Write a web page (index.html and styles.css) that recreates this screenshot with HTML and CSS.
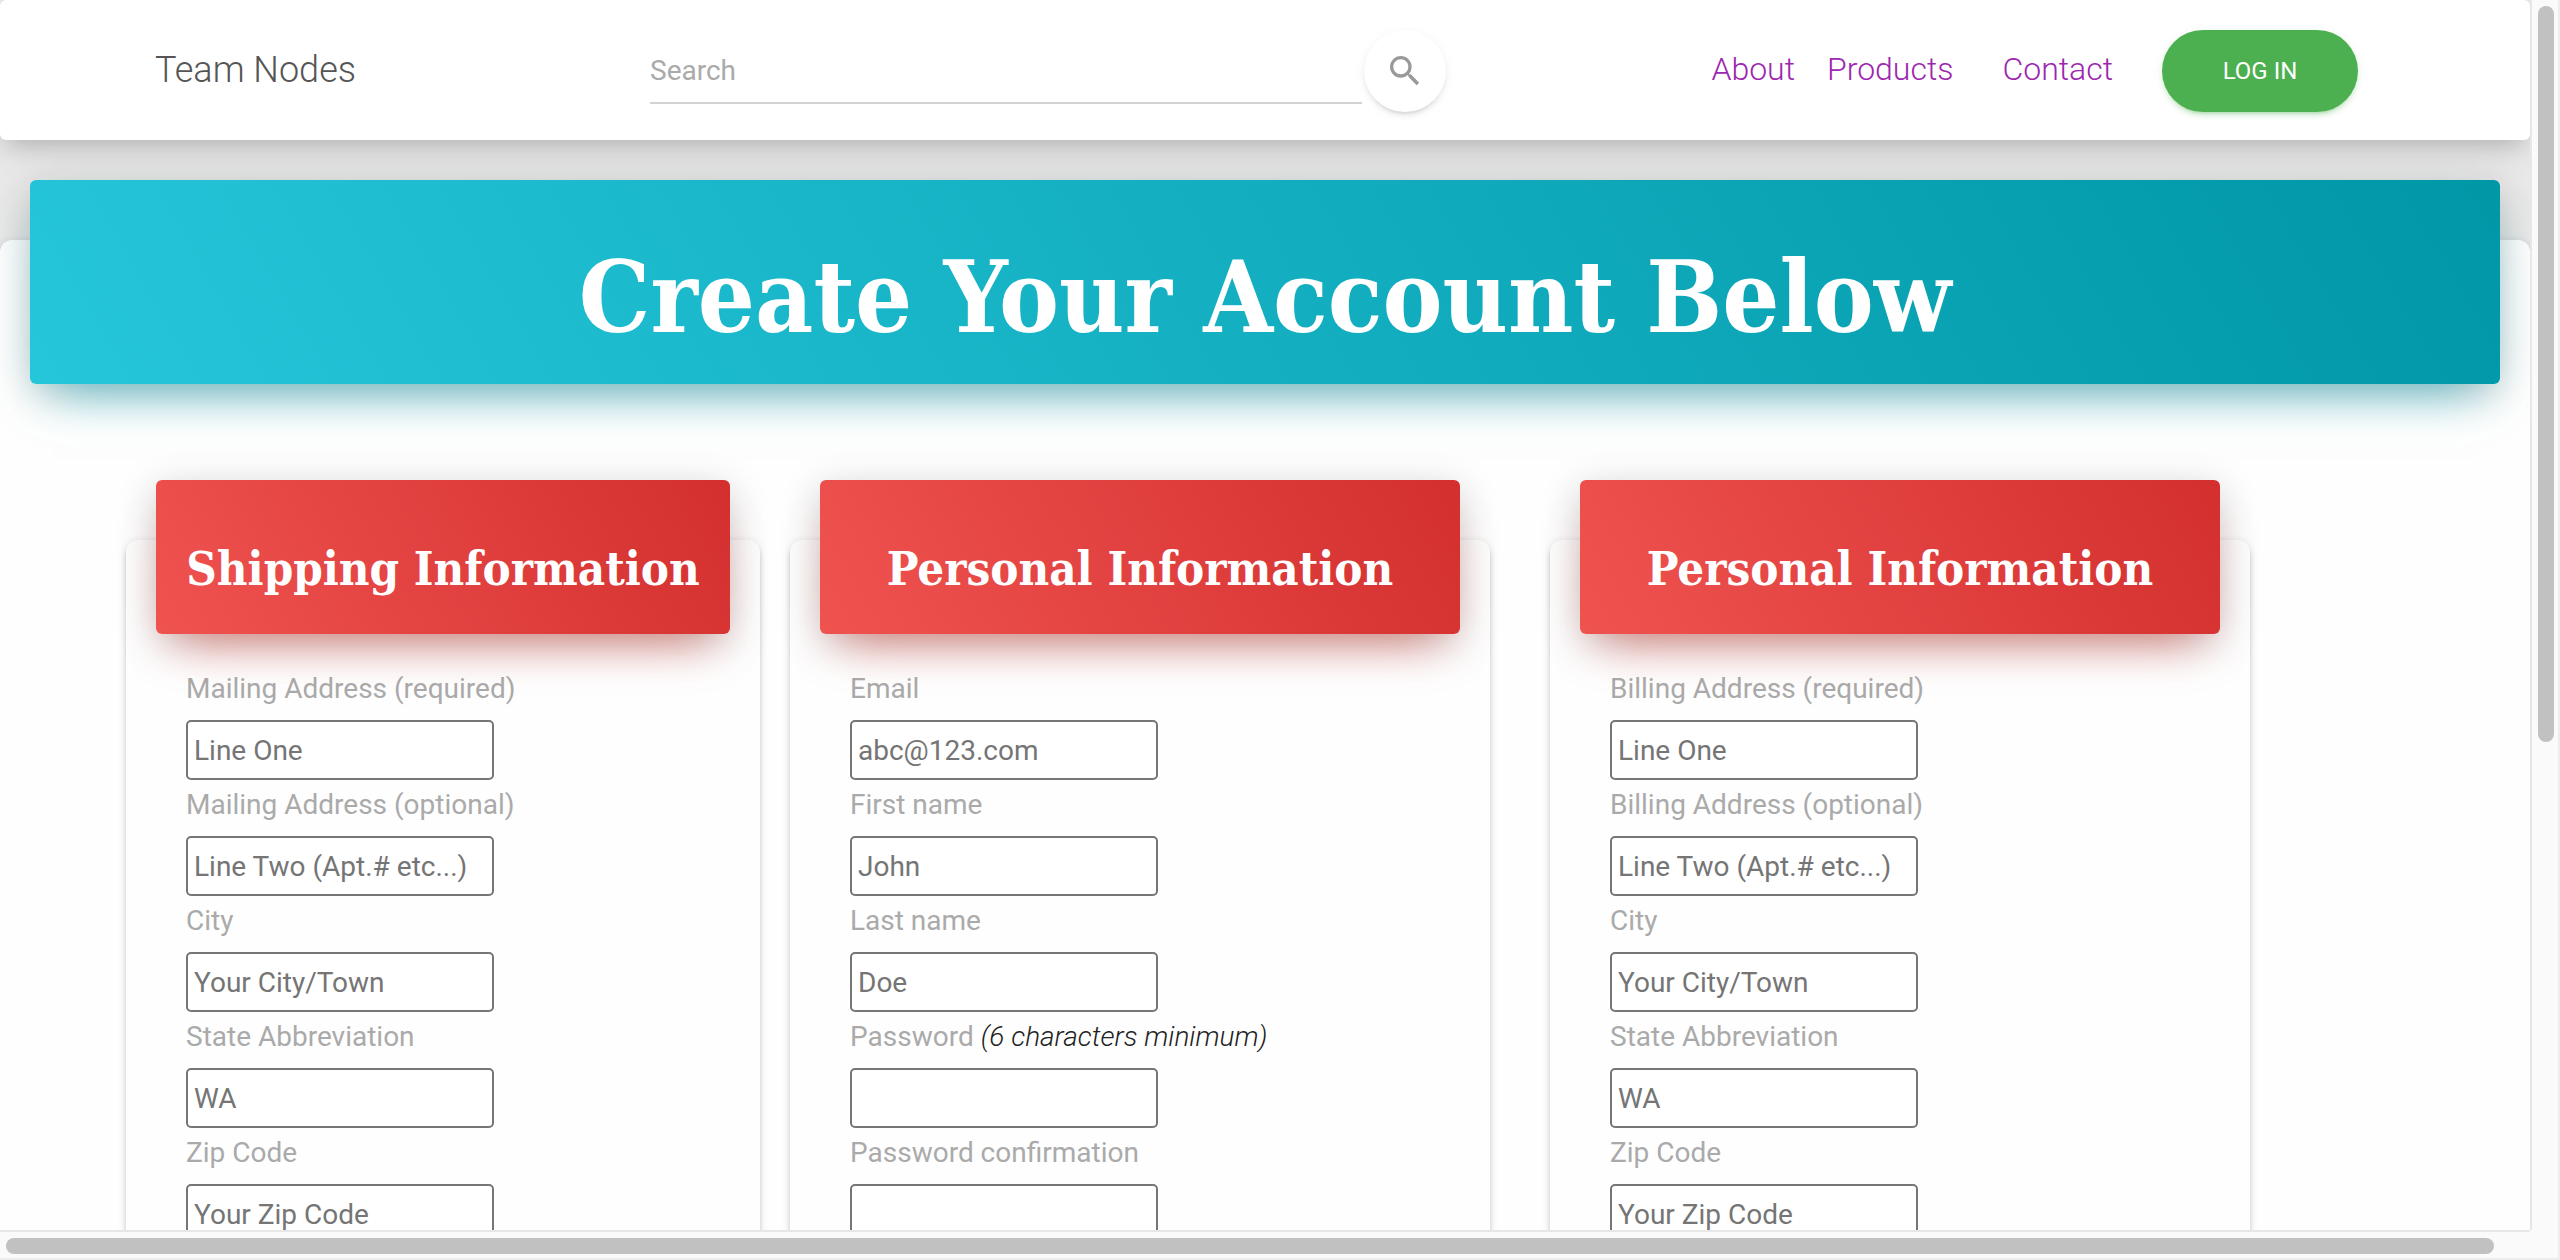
FILE: index.html
```html
<!DOCTYPE html>
<html lang="en">
<head>
<meta charset="utf-8">
<title>Team Nodes</title>
<link rel="stylesheet" href="styles.css">
</head>
<body>
<div class="window">
  <div class="viewport">
    <nav class="navbar">
      <a class="brand" href="#">Team Nodes</a>
      <form class="search">
        <input class="search-input" type="text" placeholder="Search" aria-label="Search">
        <button class="search-button" type="button" aria-label="Search">
          <svg class="search-icon" viewBox="0 0 24 24" aria-hidden="true"><path d="M15.5 14h-.79l-.28-.27A6.471 6.471 0 0 0 16 9.5 6.5 6.5 0 1 0 9.5 16c1.61 0 3.09-.59 4.23-1.57l.27.28v.79l5 4.99L20.49 19l-4.99-5zm-6 0C7.01 14 5 11.99 5 9.5S7.01 5 9.5 5 14 7.01 14 9.5 11.99 14 9.5 14z"/></svg>
        </button>
      </form>
      <div class="links">
        <a class="link" href="#">About</a>
        <a class="link link-wide" href="#">Products</a>
        <a class="link link-wide" href="#">Contact</a>
        <button class="login" type="button">LOG IN</button>
      </div>
    </nav>
    <main class="panel">
      <header class="banner"><h1 class="title">Create Your Account Below</h1></header>
      <div class="cards">
        <section class="card">
          <header class="card-header"><h3 class="card-title">Shipping Information</h3></header>
          <div class="fields">
            <label class="label" for="mail1">Mailing Address (required)</label>
            <input class="field" id="mail1" type="text" placeholder="Line One">
            <label class="label" for="mail2">Mailing Address (optional)</label>
            <input class="field" id="mail2" type="text" placeholder="Line Two (Apt.# etc...)">
            <label class="label" for="mailcity">City</label>
            <input class="field" id="mailcity" type="text" placeholder="Your City/Town">
            <label class="label" for="mailstate">State Abbreviation</label>
            <input class="field" id="mailstate" type="text" placeholder="WA">
            <label class="label" for="mailzip">Zip Code</label>
            <input class="field" id="mailzip" type="text" placeholder="Your Zip Code">
          </div>
        </section>
        <section class="card">
          <header class="card-header"><h3 class="card-title">Personal Information</h3></header>
          <div class="fields">
            <label class="label" for="email">Email</label>
            <input class="field" id="email" type="email" placeholder="abc@123.com">
            <label class="label" for="first">First name</label>
            <input class="field" id="first" type="text" placeholder="John">
            <label class="label" for="last">Last name</label>
            <input class="field" id="last" type="text" placeholder="Doe">
            <label class="label" for="password">Password <em class="hint">(6 characters minimum)</em></label>
            <input class="field" id="password" type="password">
            <label class="label" for="confirm">Password confirmation</label>
            <input class="field" id="confirm" type="password">
          </div>
        </section>
        <section class="card card-billing">
          <header class="card-header"><h3 class="card-title">Personal Information</h3></header>
          <div class="fields">
            <label class="label" for="bill1">Billing Address (required)</label>
            <input class="field" id="bill1" type="text" placeholder="Line One">
            <label class="label" for="bill2">Billing Address (optional)</label>
            <input class="field" id="bill2" type="text" placeholder="Line Two (Apt.# etc...)">
            <label class="label" for="billcity">City</label>
            <input class="field" id="billcity" type="text" placeholder="Your City/Town">
            <label class="label" for="billstate">State Abbreviation</label>
            <input class="field" id="billstate" type="text" placeholder="WA">
            <label class="label" for="billzip">Zip Code</label>
            <input class="field" id="billzip" type="text" placeholder="Your Zip Code">
          </div>
        </section>
      </div>
    </main>
  </div>
  <div class="track track-y"><div class="thumb thumb-y"></div></div>
  <div class="track track-x"><div class="thumb thumb-x"></div></div>
  <div class="corner"></div>
</div>
</body>
</html>
```
FILE: styles.css
```css
* { box-sizing: border-box; }

body {
  margin: 0;
  background: #e9e9e9;
  font-family: Roboto, "Liberation Sans", sans-serif;
  font-size: 28px;
  font-weight: 300;
}

.window {
  display: grid;
  grid-template-columns: minmax(0, 1fr) 30px;
  grid-template-rows: minmax(0, 1fr) 30px;
  height: 100vh;
  overflow: hidden;
}

.viewport { overflow: hidden; }

/* Navigation */
.navbar {
  display: flex;
  align-items: center;
  height: 140px;
  margin-bottom: 40px;
  padding: 2px 172px 0 155px;
  border-radius: 6px;
  background: #fff;
  box-shadow: 0 8px 36px 0 rgba(0, 0, 0, .12), 0 14px 20px -10px rgba(0, 0, 0, .15);
}

.brand {
  flex: 0 0 495px;
  padding-bottom: 2px;
  color: #555;
  font-size: 36px;
  line-height: 60px;
  text-decoration: none;
}

.search {
  display: flex;
  flex: 1;
  align-items: center;
  gap: 2px;
  margin-right: 265px;
}

.search-input {
  flex: 1;
  min-width: 0;
  height: 66px;
  padding: 0;
  border: 0;
  border-bottom: 2px solid #d2d2d2;
  background: transparent;
  font: 400 28px/40px Roboto, "Liberation Sans", sans-serif;
}

.search-input::placeholder { color: #aaa; }

.search-button {
  display: flex;
  align-items: center;
  justify-content: center;
  width: 82px;
  height: 82px;
  padding: 0;
  border: 0;
  border-radius: 50%;
  background: #fff;
  box-shadow: 0 4px 4px 0 rgba(153, 153, 153, .14), 0 6px 2px -4px rgba(153, 153, 153, .2), 0 2px 10px 0 rgba(153, 153, 153, .12);
}

.search-icon { width: 40px; height: 40px; fill: #999; }

.links { display: flex; align-items: center; }

.link {
  margin-right: 32px;
  padding-bottom: 4px;
  color: #9c27b0;
  font-size: 32px;
  line-height: 48px;
  text-decoration: none;
}

.link-wide { margin-right: 49px; }

.login {
  width: 196px;
  height: 82px;
  padding: 0;
  border: 0;
  border-radius: 41px;
  background: #4caf50;
  color: #fff;
  font: 400 24px/36px Roboto, "Liberation Sans", sans-serif;
  box-shadow: 0 4px 4px 0 rgba(76, 175, 80, .14), 0 6px 2px -4px rgba(76, 175, 80, .2), 0 2px 10px 0 rgba(76, 175, 80, .12);
}

/* Page panel */
.panel {
  margin-top: 100px;
  padding-bottom: 60px;
  border-radius: 12px;
  background: #fefefe;
  box-shadow: 0 4px 4px 0 rgba(0, 0, 0, .14), 0 6px 2px -4px rgba(0, 0, 0, .2), 0 2px 10px 0 rgba(0, 0, 0, .12);
}

.banner,
.card-header {
  position: relative;
  margin: 0 30px;
  border-radius: 6px;
  color: #fff;
  text-align: center;
}

.banner {
  top: -60px;
  height: 204px;
  padding-top: 56px;
  background: linear-gradient(60deg, #26c6da, #0097a7);
  box-shadow: 0 10px 40px 0 rgba(0, 0, 0, .2), 0 26px 48px -22px rgba(0, 188, 212, .6);
}

.title,
.card-title {
  margin: 0;
  font-family: "Roboto Slab", "DejaVu Serif Condensed", "DejaVu Serif", serif;
  font-weight: 700;
  white-space: nowrap;
}

.title { font-size: 100px; line-height: 122px; }

/* Account cards */
.cards {
  display: grid;
  grid-template-columns: 634fr 700fr 730fr;
  gap: 30px;
  margin-top: 96px;
  padding: 0 280px 0 126px;
}

.card {
  min-width: 0;
  padding-bottom: 60px;
  border-radius: 12px;
  background: #fefefe;
  box-shadow: 0 4px 4px 0 rgba(0, 0, 0, .14), 0 6px 2px -4px rgba(0, 0, 0, .2), 0 2px 10px 0 rgba(0, 0, 0, .12);
}

.card-billing { margin-left: 30px; }

.card-header {
  height: 154px;
  margin-top: -60px;
  padding-top: 52px;
  background: linear-gradient(60deg, #ef5350, #d32f2f);
  box-shadow: 0 10px 40px 0 rgba(0, 0, 0, .2), 0 26px 48px -22px rgba(244, 67, 54, .6);
}

.card-title { font-size: 47px; line-height: 74px; }

.fields {
  display: flex;
  flex-direction: column;
  align-items: flex-start;
  padding: 30px 60px 0;
}

.label {
  height: 56px;
  color: #aaa;
  font-weight: 400;
  line-height: 50px;
}

.hint { color: #222; font-weight: 300; }

.field {
  width: 308px;
  height: 60px;
  padding: 0 6px;
  border: 2px solid #767676;
  border-radius: 5px;
  background: #fff;
  font: 400 28px/42px Roboto, "Liberation Sans", sans-serif;
}

.field::placeholder { color: #757575; }

/* Scrollbars */
.track { padding: 6px; background: #fafafa; }
.track-y { border-right: 2px solid #ededed; border-left: 2px solid #e7e7e7; }
.track-x { border-top: 2px solid #e7e7e7; border-bottom: 2px solid #ededed; }
.thumb { border-radius: 8px; background: #c1c1c1; }
.thumb-y { width: 16px; height: 60.4%; }
.thumb-x { width: 98.8%; height: 16px; }
.corner { border-right: 2px solid #ededed; border-bottom: 2px solid #ededed; background: #fafafa; }
```
